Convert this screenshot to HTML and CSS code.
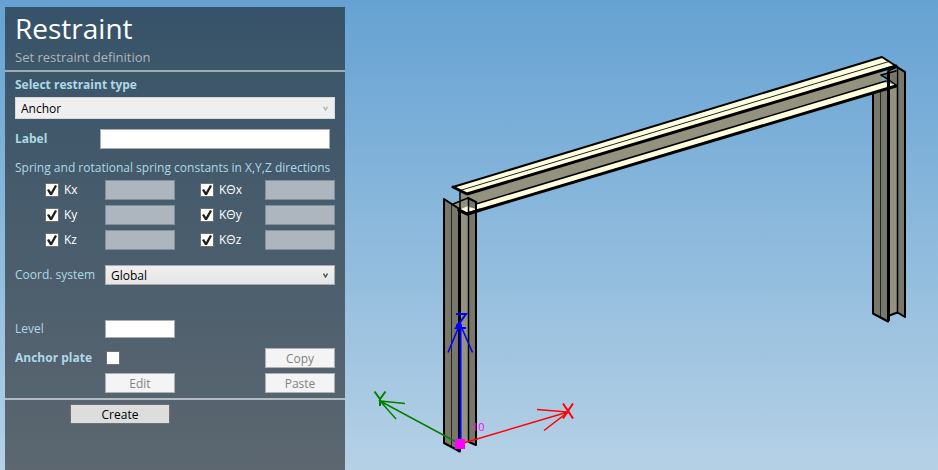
FILE: index.html
```html
<!DOCTYPE html>
<html lang="en">
<head>
<meta charset="utf-8">
<title>Restraint</title>
<meta name="viewport" content="width=device-width, initial-scale=1">
<link rel="stylesheet" href="styles.css">
</head>
<body>
<main class="workspace">
  <form class="panel">
    <header class="panel-header">
      <h1 class="title">Restraint</h1>
      <p class="subtitle">Set restraint definition</p>
    </header>

    <div class="panel-body">
      <label class="caption strong" for="type">Select restraint type</label>
      <div class="dropdown dropdown-type">
        <select id="type" class="select" disabled><option>Anchor</option></select>
        <svg class="chevron" viewBox="0 0 5 5" aria-hidden="true"><path d="M0.5 0.5 2.5 4 4.5 0.5"/></svg>
      </div>

      <div class="label-row">
        <label class="caption strong" for="label">Label</label>
        <input id="label" class="field" type="text">
      </div>

      <fieldset class="springs">
        <legend class="caption">Spring and rotational spring constants in X,Y,Z directions</legend>
        <div class="grid">
          <label class="check"><input class="box" type="checkbox" checked>Kx</label>
          <input class="field" type="text" aria-label="Kx value" disabled>
          <label class="check check-rot"><input class="box" type="checkbox" checked>KΘx</label>
          <input class="field" type="text" aria-label="KΘx value" disabled>
          <label class="check"><input class="box" type="checkbox" checked>Ky</label>
          <input class="field" type="text" aria-label="Ky value" disabled>
          <label class="check check-rot"><input class="box" type="checkbox" checked>KΘy</label>
          <input class="field" type="text" aria-label="KΘy value" disabled>
          <label class="check"><input class="box" type="checkbox" checked>Kz</label>
          <input class="field" type="text" aria-label="Kz value" disabled>
          <label class="check check-rot"><input class="box" type="checkbox" checked>KΘz</label>
          <input class="field" type="text" aria-label="KΘz value" disabled>
        </div>
      </fieldset>

      <div class="grid coord">
        <label class="caption" for="coord">Coord. system</label>
        <div class="dropdown dropdown-coord">
          <select id="coord" class="select"><option>Global</option></select>
          <svg class="chevron" viewBox="0 0 5 5" aria-hidden="true"><path d="M0.5 0.5 2.5 4 4.5 0.5"/></svg>
        </div>
      </div>

      <div class="grid level">
        <label class="caption" for="level">Level</label>
        <input id="level" class="field" type="text">
      </div>

      <div class="grid plate">
        <label class="caption strong" for="plate">Anchor plate</label>
        <input id="plate" class="box" type="checkbox">
        <button class="button copy" type="button" disabled>Copy</button>
        <button class="button edit" type="button" disabled>Edit</button>
        <button class="button paste" type="button" disabled>Paste</button>
      </div>
    </div>

    <footer class="panel-footer">
      <button class="button create" type="button">Create</button>
    </footer>
  </form>

  <svg class="scene" viewBox="345 0 593 470" preserveAspectRatio="xMinYMin meet" role="img" aria-label="Portal frame model">
    <!-- far column -->
    <g class="steel">
      <path class="side" d="M873 90 888 80V321L873 313Z"/>
      <path class="web" d="M888 75 897 68V313L888 316Z"/>
      <path class="side" d="M897 67 905 72V317L897 313Z"/>
      <path class="hair" d="M880.5 88V317"/>
      <path class="edge" d="M873 90V313.5L888 321.5M888 316 897.5 312.5 905 317V72L897 67"/>
      <path class="line" d="M897.5 67V313"/>
    </g>
    <!-- near column -->
    <g class="steel">
      <path class="side" d="M444 199 459 209V451L444 443Z"/>
      <path class="web" d="M453 204 468 198V441L459 447V209Z"/>
      <path class="side" d="M468 198 477 202V445L468 441Z"/>
      <path class="hair" d="M451.5 204V447"/>
    </g>
    <!-- beam -->
    <g class="steel">
      <path class="web" d="M461 192 467 194 882 70V83L476 204V202L468 198 461 201Z"/>
      <path class="flange" d="M459 210 468 206 884 82 896 85 467 214Z"/>
      <path class="side" d="M881 75 896 69V84L889 80Z"/>
      <path class="flange" d="M453 187 882 57 896 66 467 194Z"/>
      <path class="hair" d="M460 190.5 889 61.5"/>
      <path class="line" d="M476 204 886 81"/>
      <path class="edge" d="M453 187 882 57 896 66"/>
      <path class="heavy" d="M453 187 467 194 896 66M459 210 467 214 896 86"/>
      <path class="line" d="M460 192V209M453 204 468 198M896 71 881 75 889 80 896 85M888 71 897 67 905 72"/>
      <path class="heavy" d="M888.5 72V320"/>
    </g>
    <!-- near column outlines, in front of the beam end -->
    <g class="steel">
      <path class="side" d="M469 199 476 203V209L469 207Z"/>
      <path class="edge" d="M459.5 209 444 199V443L459 451M468 198 476 202V445L469 442"/>
      <path class="line" d="M468.5 198V441"/>
      <path class="heavy" d="M459.5 209V451"/>
      <path class="heavy" d="M459 210 467 214 480 210"/>
    </g>
    <!-- axes -->
    <g class="axis axis-y"><path d="M460 444 380 401M405 403.5 380 401 396 419"/><path class="glyph" d="M374.5 391.5 380 399 385.5 391.5M380 399V406"/></g>
    <g class="axis axis-x"><path d="M460 444 568 412M537 409.5 568 412 544 430.5"/><path class="glyph" d="M563 403.5 573 418.5M573 403.5 563 418.5"/></g>
    <g class="axis axis-z"><path class="glyph" d="M460.5 444V324"/><path d="M448 352.5 460 324 472.5 352.5"/><path class="glyph" d="M456 314H466L456 328H466"/></g>
    <circle class="tip" cx="459" cy="326" r="3"/>
    <path class="node" d="M455 439H465V449H455Z"/>
    <text class="node-id" x="472" y="431">10</text>
  </svg>
</main>
</body>
</html>
```
FILE: styles.css
```css
* { box-sizing: border-box; }

body {
  margin: 0;
  min-height: 100vh;
  background: linear-gradient(#65a2d3, #b5d1e6);
  font: 12px/16px "Open Sans", "Noto Sans", sans-serif;
  color: #fff;
}

.workspace {
  display: grid;
  grid-template-columns: 345px 1fr;
  min-height: 100vh;
}

.panel {
  margin: 7px 0 0 5px;
  background: linear-gradient(#375369, #5c6770);
}

.panel-header {
  height: 65px;
  padding: 3px 10px 0;
  border-bottom: 2px solid #9eabb7;
}

.title { margin: 0; font-size: 28px; line-height: 36px; font-weight: 400; }
.subtitle { margin: 2px 0 0; font-size: 13px; line-height: 18px; color: #b0b5ba; }

.panel-body { padding: 5px 10px; border-bottom: 2px solid #b3bcc4; }

.caption { display: block; padding: 0; color: #add8e6; }
.strong { font-weight: 700; }

.field {
  width: 100%;
  min-width: 0;
  height: 20px;
  padding: 0 4px;
  border: 1px solid #abadb3;
  border-radius: 0;
  background: #fff;
  font: inherit;
}
.field:disabled { background: #adb5be; border-color: #82909d; }

.dropdown { display: grid; align-items: center; }
.dropdown > * { grid-area: 1 / 1; }
.dropdown-type { margin-top: 4px; }
.dropdown-coord { grid-column: 2 / -1; }

.select {
  appearance: none;
  width: 100%;
  height: 20px;
  padding: 2px 5px 0;
  border: 1px solid #acacac;
  border-radius: 0;
  background: linear-gradient(#f0f0f0, #e5e5e5);
  font: inherit;
  line-height: 16px;
  color: #000;
}
.select:disabled { height: 22px; background: #efefef; border-color: #d9d9d9; color: #000; opacity: 1; }

.chevron {
  width: 5px;
  height: 5px;
  margin-right: 7px;
  justify-self: end;
  fill: none;
  stroke: #555;
  stroke-width: 1.5;
  pointer-events: none;
}
.select:disabled + .chevron { stroke: #b5b5b5; }

.label-row {
  display: grid;
  grid-template-columns: 85px 1fr;
  align-items: center;
  margin: 10px 5px 0 0;
}

.springs { min-width: 0; margin: 11px 0 0; padding: 0; border: 0; }
.springs .grid { padding-top: 4px; }

.grid {
  display: grid;
  grid-template-columns: 90px 1fr 90px 1fr;
  gap: 5px 0;
  align-items: center;
}

.check { display: flex; align-items: center; gap: 5px; padding-left: 30px; }
.check-rot { padding-left: 25px; }

.box {
  appearance: none;
  width: 14px;
  height: 14px;
  margin: 0;
  border: 1px solid #707070;
  background: #fff;
}
.box:checked::before {
  content: "";
  display: block;
  width: 12px;
  height: 12px;
  background: #212121;
  clip-path: polygon(1px 6px, 3px 5px, 5px 8px, 9px 1px, 11px 2px, 6px 11px, 4px 11px);
}

.coord { margin-top: 15px; }
.level { margin-top: 35px; }
.level .field { height: 18px; }
.plate { margin-top: 10px; }
.plate .box { margin-left: 1px; }

.button {
  height: 20px;
  padding: 2px 0 0;
  border: 1px solid #707070;
  border-radius: 0;
  background: #ddd;
  font: inherit;
  color: #000;
}
.button:disabled { border-color: #adb2b5; background: #f4f4f4; color: #838383; }
.copy, .paste { grid-column: 4; }
.edit { grid-column: 2; }

.panel-footer { padding: 4px 65px; }
.create { display: block; width: 100px; }

.scene { display: block; width: 100%; height: auto; }
.side { fill: #77776a; }
.web { fill: #92927f; }
.flange { fill: #ffffe0; }
.hair, .line, .edge, .heavy { fill: none; stroke: #000; stroke-linejoin: round; stroke-linecap: round; }
.hair { stroke-width: 1; stroke: #222; }
.line { stroke-width: 1.5; }
.edge { stroke-width: 2; }
.heavy { stroke-width: 3; }
.axis { fill: none; stroke-width: 1.5; }
.axis .glyph { stroke-width: 2; }
.axis-x { stroke: #f00; }
.axis-y { stroke: #008000; }
.axis-z { stroke: #00f; }
.tip { fill: #00f; }
.node { fill: #f0f; }
.node-id { fill: #f0f; font: 11px "Open Sans", sans-serif; }
```
